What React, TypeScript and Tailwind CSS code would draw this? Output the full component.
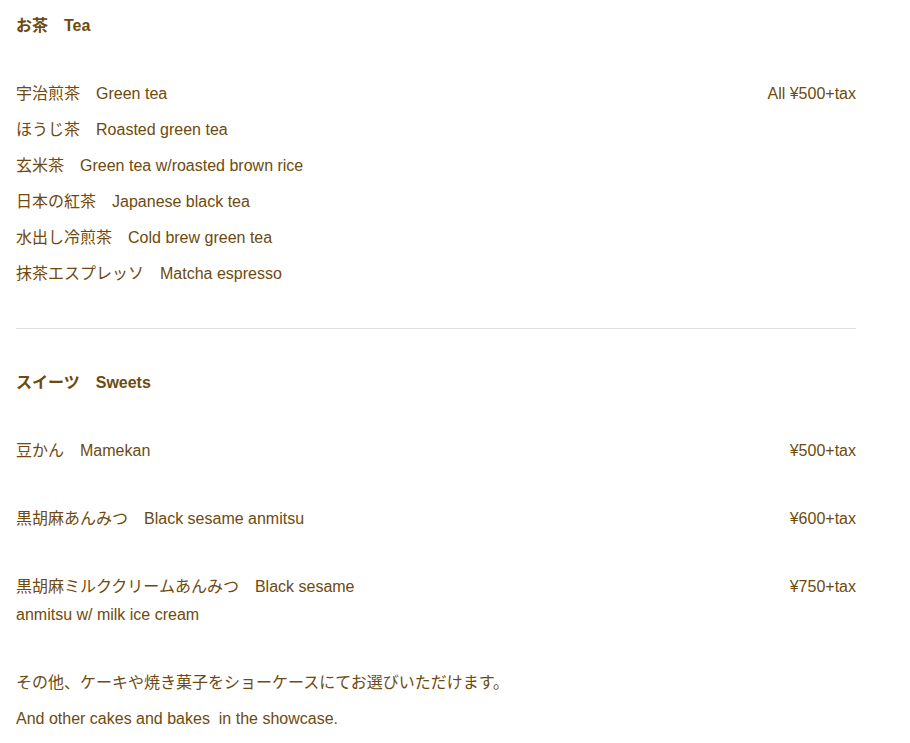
const teas = [
  { ja: "宇治煎茶", en: "Green tea", price: "All ¥500+tax" },
  { ja: "ほうじ茶", en: "Roasted green tea" },
  { ja: "玄米茶", en: "Green tea w/roasted brown rice" },
  { ja: "日本の紅茶", en: "Japanese black tea" },
  { ja: "水出し冷煎茶", en: "Cold brew green tea" },
  { ja: "抹茶エスプレッソ", en: "Matcha espresso" },
];

const sweets = [
  { ja: "豆かん", en: "Mamekan", price: "¥500+tax" },
  { ja: "黒胡麻あんみつ", en: "Black sesame anmitsu", price: "¥600+tax" },
  { ja: "黒胡麻ミルククリームあんみつ", en: "Black sesame anmitsu w/ milk ice cream", price: "¥750+tax" },
];

const Row = ({ ja, en, price }: { ja: string; en: string; price?: string }) => (
  <div className="flex justify-between">
    <p className="w-[380px]">
      {ja}
      {"\u3000"}
      {en}
    </p>
    {price && <p className="text-right">{price}</p>}
  </div>
);

export default function App() {
  return (
    <div
      className="min-h-screen bg-white text-[#6e4a0e] text-[16px] leading-[28px] pt-[12px] pl-4 w-[856px]"
      style={{ fontFamily: '"Liberation Sans", "Noto Sans CJK JP", sans-serif' }}
    >
      <section className="flex flex-col gap-10">
        <h2 className="font-bold">お茶{"\u3000"}Tea</h2>
        <div className="flex flex-col gap-2">
          {teas.map((t) => (
            <Row key={t.ja} {...t} />
          ))}
        </div>
      </section>

      <hr className="my-10 border-0 border-t border-[#dddddd]" />

      <section className="flex flex-col gap-10">
        <h2 className="font-bold">スイーツ{"\u3000"}Sweets</h2>
        {sweets.map((s) => (
          <Row key={s.ja} {...s} />
        ))}
        <div className="flex flex-col gap-2">
          <p>その他、ケーキや焼き菓子をショーケースにてお選びいただけます。</p>
          <p>And other cakes and bakes&nbsp; in the showcase.</p>
        </div>
      </section>
    </div>
  );
}
